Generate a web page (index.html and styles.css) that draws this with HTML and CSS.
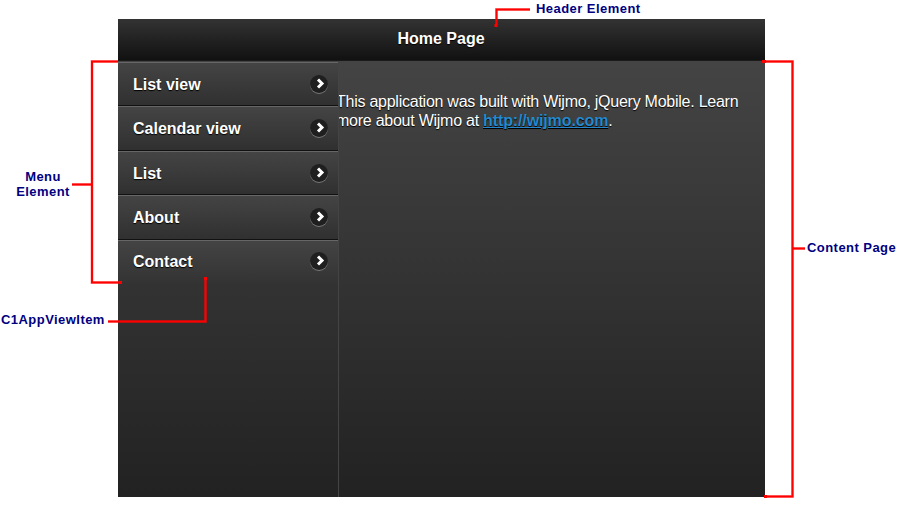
FILE: index.html
```html
<!DOCTYPE html>
<html lang="en">
<head>
<meta charset="utf-8">
<title>Home Page</title>
<link rel="stylesheet" href="styles.css">
</head>
<body>
<div class="app">
  <header class="app-header">Home Page</header>
  <div class="app-body">
    <nav class="menu">
      <a class="menu-item">List view<span class="chev"><svg viewBox="0 0 18 18" width="18" height="18"><path d="M8 4.500l4 4-4 4" /></svg></span></a>
      <a class="menu-item">Calendar view<span class="chev"><svg viewBox="0 0 18 18" width="18" height="18"><path d="M8 4.500l4 4-4 4" /></svg></span></a>
      <a class="menu-item">List<span class="chev"><svg viewBox="0 0 18 18" width="18" height="18"><path d="M8 4.500l4 4-4 4" /></svg></span></a>
      <a class="menu-item">About<span class="chev"><svg viewBox="0 0 18 18" width="18" height="18"><path d="M8 4.500l4 4-4 4" /></svg></span></a>
      <a class="menu-item">Contact<span class="chev"><svg viewBox="0 0 18 18" width="18" height="18"><path d="M8 4.500l4 4-4 4" /></svg></span></a>
    </nav>
    <main class="content">
      <p>This application was built with Wijmo, jQuery Mobile. Learn more about Wijmo at <a class="link">http://wijmo.com</a>.</p>
    </main>
  </div>
</div>

<svg class="callouts" width="897" height="507" viewBox="0 0 897 507">
  <g class="halo">
    <path d="M496.5 25V9.5H530"/>
    <path d="M118 61.500H92V282.500H120"/>
    <path d="M92 184.500H72"/>
    <path d="M765 61.500H792.500V496.500H765"/>
    <path d="M793 248.500H805"/>
    <path d="M205.500 278V321.500H108"/>
  </g>
  <g class="line">
    <path d="M496.5 25V9.5H530"/>
    <path d="M118 61.500H92V282.500H120"/>
    <path d="M92 184.500H72"/>
    <path d="M765 61.500H792.500V496.500H765"/>
    <path d="M793 248.500H805"/>
    <path d="M205.500 278V321.500H108"/>
  </g>
  <g class="dot">
    <rect x="494.500" y="24" width="3" height="3"/>
    <rect x="119" y="281" width="3" height="3"/>
    <rect x="204" y="277" width="3" height="3"/>
    <rect x="762" y="60" width="4" height="3"/>
    <rect x="764" y="495" width="3" height="3"/>
  </g>
</svg>
<span class="label label-header">Header Element</span>
<span class="label label-menu">Menu<br>Element</span>
<span class="label label-item">C1AppViewItem</span>
<span class="label label-content">Content Page</span>
</body>
</html>
```

FILE: styles.css
```css
* { box-sizing: border-box; }
html, body { margin: 0; height: 100%; background: #fff; }
body {
  padding: 19px 0 0 118px;
  font-family: "Liberation Sans", Arial, sans-serif;
  overflow: hidden;
}
.app { width: 647px; height: 478px; display: flex; flex-direction: column; }
.app-header {
  height: 42px;
  flex: none;
  display: flex;
  align-items: center;
  justify-content: center;
  padding: 0 1px 2px 0;
  background: linear-gradient(#333, #111);
  color: #fff;
  font-size: 16px;
  font-weight: bold;
  text-shadow: 0 1px 1px #000;
  border-bottom: 1px solid #1a1a1a;
}
.app-body {
  flex: 1;
  display: flex;
  background: linear-gradient(#444, #222);
}
.menu {
  width: 221px;
  flex: none;
  padding-top: 1px;
  position: relative;
  z-index: 1;
  border-right: 1px solid #444;
}
.menu-item {
  display: flex;
  align-items: center;
  justify-content: space-between;
  height: 44.4px;
  padding: 1.4px 10px 0 15px;
  border-top: 1px solid #666;
  border-bottom: 1px solid #111;
  background: linear-gradient(#444, #303030);
  color: #fff;
  font-size: 16px;
  font-weight: bold;
  text-shadow: 0 1px 1px #000;
}
.menu-item:last-child {
  border-bottom-color: transparent;
  background: linear-gradient(#444, #333) border-box;
}
.chev {
  width: 18px;
  height: 18px;
  margin-top: -2px;
  border-radius: 50%;
  background: #1f1f1f;
  box-shadow: 0 1px 0 #777;
  display: block;
}
.chev svg { display: block; }
.chev path { fill: none; stroke: #fff; stroke-width: 3; }
.content { flex: 1; min-width: 0; margin-left: -3px; padding: 0 24px 0 0; color: #fff; font-size: 16px; line-height: 19px; letter-spacing: -.25px; text-shadow: 0 1px 1px #000; }
.content p { margin: 31px 0 0; }
.link { color: #2489ce; font-weight: bold; text-decoration: underline; letter-spacing: -.12px; }
.callouts { position: absolute; left: 0; top: 0; pointer-events: none; z-index: 2; }
.callouts path { fill: none; }
.halo path { stroke: rgba(255, 0, 0, .35); stroke-width: 3; }
.line path { stroke: #f00; stroke-width: 2; }
.dot rect { fill: #f00; }
.label {
  position: absolute;
  z-index: 3;
  color: #000080;
  font-size: 13px;
  font-weight: bold;
  line-height: 14px;
  letter-spacing: .45px;
  white-space: nowrap;
}
.label-header { left: 536px; top: 2px; }
.label-menu { left: 10px; top: 169px; width: 66px; line-height: 15px; text-align: center; }
.label-item { left: 1px; top: 313px; }
.label-content { left: 807px; top: 241px; }
```
